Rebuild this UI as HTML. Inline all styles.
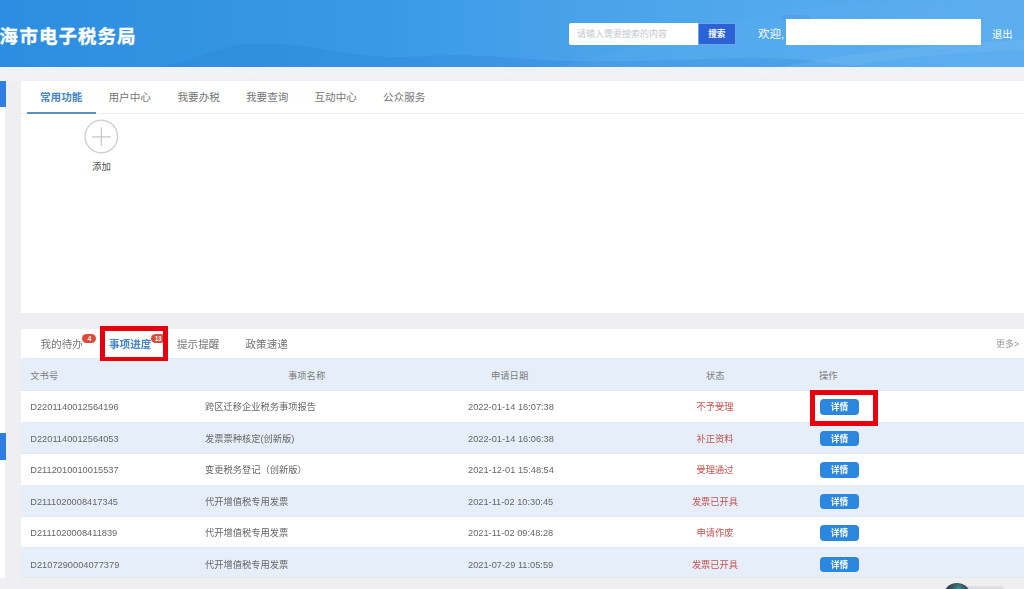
<!DOCTYPE html>
<html lang="zh-CN">
<head>
<meta charset="utf-8">
<title>电子税务局</title>
<style>
*{box-sizing:border-box;margin:0;padding:0}
html,body{width:1024px;height:589px;overflow:hidden}
body{position:relative;background:#efeff2;font-family:"Liberation Sans","Noto Sans CJK SC",sans-serif;color:#666;filter:blur(0.6px)}
.abs{position:absolute;white-space:nowrap}
/* header */
#hdr{left:0;top:0;width:1024px;height:67px;background:linear-gradient(90deg,#2c8ee0 0%,#3a99e6 38%,#4aa3ea 58%,#52a9ec 75%,#5aadee 100%);overflow:hidden}
#hdr svg{position:absolute;left:0;top:0}
#title{left:.2px;top:23px;-webkit-text-stroke:.35px #fff;font-size:18.5px;line-height:28px;font-weight:700;color:#fff;letter-spacing:1px}
#sinp{left:569px;top:23px;width:130px;height:22px;background:#fff;border-radius:2px 0 0 2px;font-size:9px;line-height:22px;color:#c4c8cf;padding-left:8px}
#sbtn{left:698px;top:23px;width:37.5px;height:22px;background:#2b62d6;border:1px solid #6fa4ee;border-radius:0 2px 2px 0;font-size:8.6px;line-height:20px;color:#fff;font-weight:700;text-align:center}
#wel{left:758px;top:24.7px;font-size:11.5px;line-height:18px;color:#fff}
#mask{left:786px;top:19px;width:195px;height:26px;background:#fff}
#out{left:992px;top:25.6px;font-size:10.3px;line-height:18px;color:#fff}
/* sidebar */
.sw{left:0;width:5px;background:#fff}
.sb{left:0;width:6px;background:#2f7de1}
/* panels */
.panel{background:#fff}
.tab{font-size:10.6px;line-height:16px;color:#747474}
.tab.on{color:#4685c6;font-weight:700}
.badge{width:14px;height:9.6px;border-radius:5px;background:#dc4a38;color:#fff;font-size:7px;line-height:10px;text-align:center;font-weight:700}
.row{left:21px;width:1003px;height:31.5px}
.row.b{background:#e6eff9;box-shadow:inset 0 1px 0 #e2e9f1,inset 0 -1px 0 #e2e9f1}
.c{font-size:9.25px;line-height:14px;color:#666}
.th{font-size:9.3px;line-height:14px;color:#7d7d7d}
.st{color:#c6514e;text-align:center;width:80px}
.btn{left:820px;width:39px;height:15.5px;border-radius:4px;background:#2b86de;color:#fff;font-size:8.7px;line-height:16.2px;font-weight:700;text-align:center}
.red{border:3px solid #e8000f;z-index:5}
</style>
</head>
<body>
<!-- header -->
<div id="hdr" class="abs">
<svg width="1024" height="67" viewBox="0 0 1024 67">
<path d="M160 67 C195 60 215 46 250 44 C285 42 310 47 340 52 C370 57 395 58 430 56 C470 54 500 57 540 60 C600 63 680 60 740 58 C790 57 830 62 860 67 Z" fill="#2a80d6" opacity=".3"/>
<path d="M560 67 C640 44 720 22 800 9 C860 0 930 0 1024 0 L1024 67 Z" fill="#6ab6f1" opacity=".16"/>
<path d="M780 67 C840 56 900 46 1024 40 L1024 50 C930 54 880 60 850 67 Z" fill="#7fc1f4" opacity=".25"/>
<rect x="781" y="15" width="29" height="5" fill="#4f8fd6" opacity=".3"/>
</svg>
<div id="title" class="abs"><span style="margin-left:-1px;margin-right:.8px">海</span>市电子税务局</div>
<div id="sinp" class="abs">请输入需要搜索的内容</div>
<div id="sbtn" class="abs">搜索</div>
<div id="wel" class="abs">欢迎,</div>
<div id="mask" class="abs"></div>
<div id="out" class="abs">退出</div>
</div>

<div class="abs" style="left:0;top:67px;width:1024px;height:14px;background:linear-gradient(180deg,#edf2fa 0,#f2f3f7 45%,#f1f1f4 100%)"></div>
<!-- sidebar -->
<div class="abs sw" style="top:81px;height:497px"></div>
<div class="abs sb" style="top:81px;height:26px"></div>
<div class="abs sb" style="top:433px;height:27px"></div>

<!-- panel 1 -->
<div class="abs panel" style="left:21px;top:81px;width:1003px;height:232px"></div>
<div class="abs" style="left:21px;top:113px;width:1003px;height:1px;background:#f0f0f0"></div>
<div class="abs" style="left:27px;top:112px;width:69px;height:2px;background:#5a92c8"></div>
<div class="abs tab on" style="left:40px;top:89px">常用功能</div>
<div class="abs tab" style="left:108.5px;top:89px">用户中心</div>
<div class="abs tab" style="left:177.5px;top:89px">我要办税</div>
<div class="abs tab" style="left:246px;top:89px">我要查询</div>
<div class="abs tab" style="left:314.5px;top:89px">互动中心</div>
<div class="abs tab" style="left:383px;top:89px">公众服务</div>
<svg class="abs" style="left:83px;top:117.5px" width="37" height="37" viewBox="0 0 37 37">
<circle cx="18.3" cy="18.5" r="16.3" fill="none" stroke="#d2d2d2" stroke-width="1.5"/>
<path d="M8.8 18.8H27.8M18.3 9.3V28.3" stroke="#c6c6c6" stroke-width="1.2" fill="none"/>
</svg>
<div class="abs c" style="left:92px;top:160px;font-size:9.4px;color:#505050">添加</div>

<!-- panel 2 -->
<div class="abs panel" style="left:21px;top:329px;width:1003px;height:249px"></div>
<div class="abs tab" style="left:40.5px;top:336px">我的待办</div>
<div class="abs badge" style="left:82.4px;top:333.8px">4</div>
<div class="abs" style="left:95px;top:358px;width:70px;height:2px;background:#3a4a5c"></div>
<div class="abs tab on" style="left:109px;top:336px">事项进度</div>
<div class="abs badge" style="left:151px;top:333.6px;font-size:6.5px;letter-spacing:-.3px">13</div>
<div class="abs tab" style="left:177px;top:336px">提示提醒</div>
<div class="abs tab" style="left:245.5px;top:336px">政策速递</div>
<div class="abs c" style="left:996px;top:337px;font-size:9px;color:#999">更多&gt;</div>
<div class="abs red" style="left:100.4px;top:326px;width:67.6px;height:35.4px;border-width:5px 5px 4px 5px"></div>

<!-- table -->
<div class="abs row b" style="top:358px;height:32.6px"></div>
<div class="abs th" style="left:30.3px;top:369px">文书号</div>
<div class="abs th" style="left:288px;top:369px">事项名称</div>
<div class="abs th" style="left:491px;top:369px">申请日期</div>
<div class="abs th" style="left:706px;top:369px">状态</div>
<div class="abs th" style="left:819px;top:369px">操作</div>

<div class="abs row b" style="top:422px"></div>
<div class="abs row b" style="top:485px"></div>
<div class="abs row b" style="top:547px;height:31px"></div>

<!-- r1 -->
<div class="abs c" style="left:30.3px;top:400px">D2201140012564196</div>
<div class="abs c" style="left:205px;top:400px">跨区迁移企业税务事项报告</div>
<div class="abs c" style="left:468px;top:400px">2022-01-14 16:07:38</div>
<div class="abs c st" style="left:675px;top:400px">不予受理</div>
<div class="abs btn" style="top:399px">详情</div>
<!-- r2 -->
<div class="abs c" style="left:30.3px;top:431.5px">D2201140012564053</div>
<div class="abs c" style="left:205px;top:431.5px">发票票种核定(创新版)</div>
<div class="abs c" style="left:468px;top:431.5px">2022-01-14 16:06:38</div>
<div class="abs c st" style="left:675px;top:431.5px">补正资料</div>
<div class="abs btn" style="top:430.5px">详情</div>
<!-- r3 -->
<div class="abs c" style="left:30.3px;top:463px">D2112010010015537</div>
<div class="abs c" style="left:205px;top:463px">变更税务登记（创新版）</div>
<div class="abs c" style="left:468px;top:463px">2021-12-01 15:48:54</div>
<div class="abs c st" style="left:675px;top:463px">受理通过</div>
<div class="abs btn" style="top:462px">详情</div>
<!-- r4 -->
<div class="abs c" style="left:30.3px;top:494.5px">D2111020008417345</div>
<div class="abs c" style="left:205px;top:494.5px">代开增值税专用发票</div>
<div class="abs c" style="left:468px;top:494.5px">2021-11-02 10:30:45</div>
<div class="abs c st" style="left:675px;top:494.5px">发票已开具</div>
<div class="abs btn" style="top:493.5px">详情</div>
<!-- r5 -->
<div class="abs c" style="left:30.3px;top:526px">D2111020008411839</div>
<div class="abs c" style="left:205px;top:526px">代开增值税专用发票</div>
<div class="abs c" style="left:468px;top:526px">2021-11-02 09:48:28</div>
<div class="abs c st" style="left:675px;top:526px">申请作废</div>
<div class="abs btn" style="top:525px">详情</div>
<!-- r6 -->
<div class="abs c" style="left:30.3px;top:557.5px">D2107290004077379</div>
<div class="abs c" style="left:205px;top:557.5px">代开增值税专用发票</div>
<div class="abs c" style="left:468px;top:557.5px">2021-07-29 11:05:59</div>
<div class="abs c st" style="left:675px;top:557.5px">发票已开具</div>
<div class="abs btn" style="top:556.5px">详情</div>

<div class="abs red" style="left:810px;top:390px;width:68px;height:36px;border-width:5px"></div>

<!-- floating widget -->
<div class="abs" style="left:943px;top:582.6px;width:28px;height:28px;border-radius:14px;background:radial-gradient(circle at 55% 22%,#3f9c98 0,#3b6f74 14%,#39424d 34%);z-index:3"></div>
<div class="abs" style="left:966px;top:586.4px;width:38px;height:10px;background:#dcdde0;border-radius:0 4px 0 0"></div>
</body>
</html>
